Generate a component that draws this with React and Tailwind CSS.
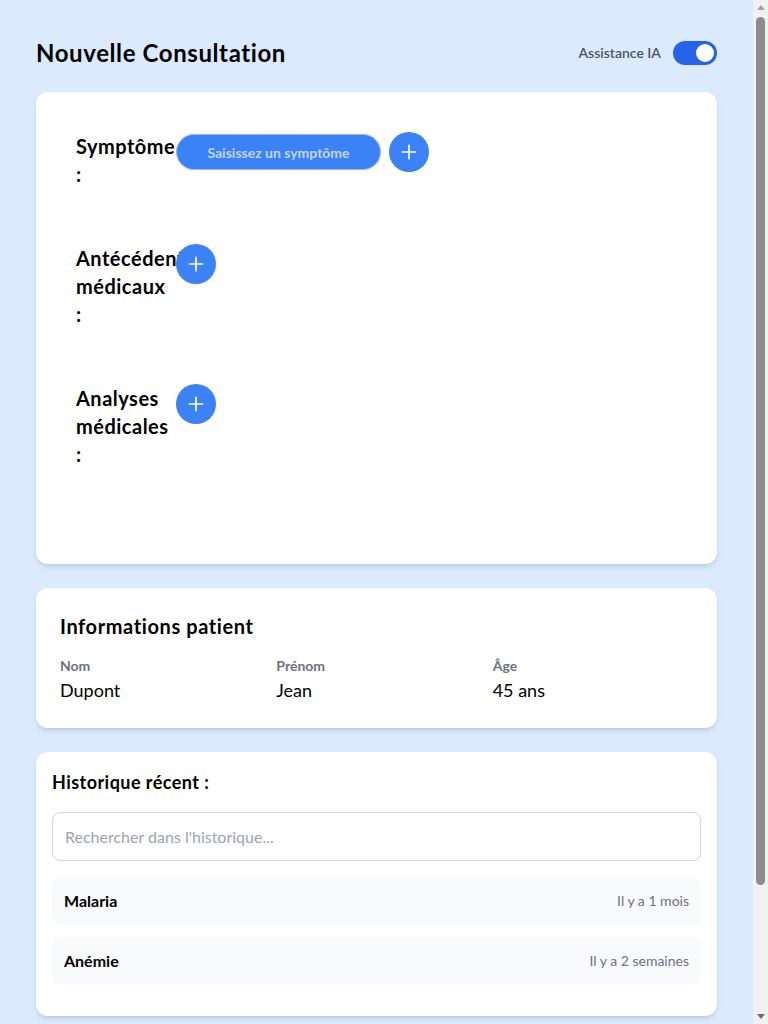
import React from "react";

const Plus = () => (
  <svg width="20" height="20" viewBox="0 0 24 24" fill="none" stroke="white" strokeWidth="2" strokeLinecap="round">
    <path d="M12 4v16M4 12h16" />
  </svg>
);

const PlusBtn = () => (
  <button className="w-10 h-10 rounded-full bg-[#3b82f6] flex items-center justify-center shrink-0">
    <Plus />
  </button>
);

function Scrollbar() {
  return (
    <div className="fixed top-0 right-0 h-screen w-[15px] bg-[#f1f1f1] flex flex-col items-center">
      <div className="h-[15px] flex items-center justify-center">
        <div className="w-0 h-0 border-l-[4px] border-r-[4px] border-b-[5px] border-l-transparent border-r-transparent border-b-[#a3a3a3]" />
      </div>
      <div className="w-[9px] h-[868px] mt-[2px] rounded-full bg-[#8c8c8c]" />
      <div className="flex-1" />
      <div className="h-[15px] flex items-center justify-center">
        <div className="w-0 h-0 border-l-[4px] border-r-[4px] border-t-[5px] border-l-transparent border-r-transparent border-t-[#6e6e6e]" />
      </div>
    </div>
  );
}

const labelCls =
  "w-[100px] shrink-0 text-xl leading-7 font-bold tracking-[0.025em] whitespace-nowrap";

export default function App() {
  return (
    <div
      className="min-h-screen bg-[#dbeafe] text-black"
      style={{ fontFamily: 'Lato, "Open Sans", sans-serif' }}
    >
      <div className="pl-9 pr-[51px] pt-[37px] pb-[155px]">
        <div className="flex items-center justify-between mb-[23px] h-8">
          <h1 className="text-2xl font-bold tracking-[0.025em]">Nouvelle Consultation</h1>
          <div className="flex items-center gap-3">
            <span className="text-sm font-semibold text-[#4b5563]">Assistance IA</span>
            <div className="w-11 h-6 rounded-full bg-[#2563eb] flex items-center justify-end px-[3px]">
              <div className="w-[18px] h-[18px] rounded-full bg-white" />
            </div>
          </div>
        </div>

        <div className="bg-white rounded-xl shadow-md p-10 mb-6">
          <div className="flex items-start mb-14">
            <div className={labelCls}>
              Symptôme
              <br />:
            </div>
            <div className="flex items-center gap-2 h-10">
              <input
                className="w-[205px] h-9 rounded-full bg-[#3b82f6] border border-[#93b8f8] text-center text-sm font-bold text-white placeholder:text-[#c2d7fb] outline-none"
                placeholder="Saisissez un symptôme"
              />
              <PlusBtn />
            </div>
          </div>
          <div className="flex items-start mb-14">
            <div className={labelCls}>
              Antécédents
              <br />
              médicaux
              <br />:
            </div>
            <PlusBtn />
          </div>
          <div className="flex items-start mb-14">
            <div className={labelCls}>
              Analyses
              <br />
              médicales
              <br />:
            </div>
            <PlusBtn />
          </div>
        </div>

        <div className="bg-white rounded-xl shadow-md p-6 mb-6">
          <h2 className="text-xl leading-7 font-bold tracking-[0.03em] mb-4">Informations patient</h2>
          <div className="grid grid-cols-3 gap-4">
            <div>
              <div className="text-sm font-bold text-[#6b7280]">Nom</div>
              <div className="text-lg leading-7">Dupont</div>
            </div>
            <div>
              <div className="text-sm font-bold text-[#6b7280]">Prénom</div>
              <div className="text-lg leading-7">Jean</div>
            </div>
            <div>
              <div className="text-sm font-bold text-[#6b7280]">Âge</div>
              <div className="text-lg leading-7">45 ans</div>
            </div>
          </div>
        </div>

        <div className="bg-white rounded-xl shadow-md px-4 pt-4 pb-[31px]">
          <h2 className="text-lg leading-7 font-bold tracking-[0.025em] mb-4">Historique récent :</h2>
          <input
            className="w-full h-[49px] border border-[#d1d5db] rounded-lg px-3 text-base placeholder:text-[#9ca3af] outline-none mb-4"
            placeholder="Rechercher dans l'historique..."
          />
          <div className="flex flex-col gap-3">
            <div className="flex items-center justify-between bg-[#f9fafb] rounded-lg px-3 h-12">
              <span className="text-base font-bold">Malaria</span>
              <span className="text-sm text-[#6b7280]">Il y a 1 mois</span>
            </div>
            <div className="flex items-center justify-between bg-[#f9fafb] rounded-lg px-3 h-12">
              <span className="text-base font-bold">Anémie</span>
              <span className="text-sm text-[#6b7280]">Il y a 2 semaines</span>
            </div>
          </div>
        </div>
      </div>
      <Scrollbar />
    </div>
  );
}
